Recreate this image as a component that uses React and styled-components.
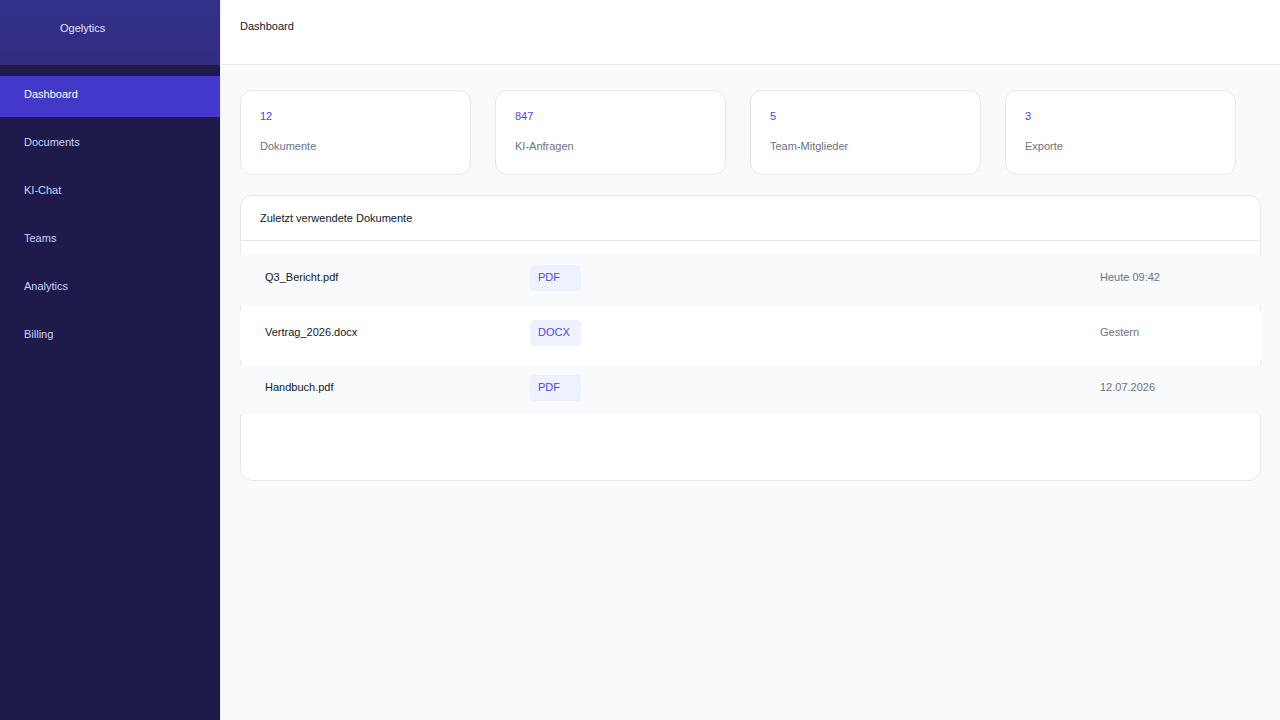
import React from "react";
import styled, { createGlobalStyle } from "styled-components";

const GlobalStyle = createGlobalStyle`
  * { box-sizing: border-box; }
  html, body { margin: 0; padding: 0; }
  body {
    font-family: "Liberation Sans", Arial, sans-serif;
    background: #f8fafc;
    color: #111827;
  }
`;

const navItems = ["Dashboard", "Documents", "KI-Chat", "Teams", "Analytics", "Billing"];

const stats = [
  { value: "12", label: "Dokumente" },
  { value: "847", label: "KI-Anfragen" },
  { value: "5", label: "Team-Mitglieder" },
  { value: "3", label: "Exporte" }
];

const documents = [
  { name: "Q3_Bericht.pdf", type: "PDF", date: "Heute 09:42" },
  { name: "Vertrag_2026.docx", type: "DOCX", date: "Gestern" },
  { name: "Handbuch.pdf", type: "PDF", date: "12.07.2026" }
];

const App = () => (
  <>
    <GlobalStyle />
    <Layout>
      <Sidebar>
        <Logo>Ogelytics</Logo>
        <Nav>
          {navItems.map((item, i) => (
            <NavItem key={item} active={i === 0}>
              {item}
            </NavItem>
          ))}
        </Nav>
      </Sidebar>
      <Main>
        <Header>Dashboard</Header>
        <Content>
          <StatGrid>
            {stats.map(stat => (
              <StatCard key={stat.label}>
                <StatValue>{stat.value}</StatValue>
                <StatLabel>{stat.label}</StatLabel>
              </StatCard>
            ))}
          </StatGrid>
          <Panel>
            <PanelTitle>Zuletzt verwendete Dokumente</PanelTitle>
            <DocList>
              {documents.map((doc, i) => (
                <DocRow key={doc.name} striped={i % 2 === 0}>
                  <DocName>{doc.name}</DocName>
                  <div>
                    <Badge>{doc.type}</Badge>
                  </div>
                  <DocDate>{doc.date}</DocDate>
                </DocRow>
              ))}
            </DocList>
          </Panel>
        </Content>
      </Main>
    </Layout>
  </>
);

const Layout = styled.div`
  display: flex;
  min-height: 100vh;
`;

const Sidebar = styled.aside`
  width: 221px;
  flex-shrink: 0;
  background: #1e1b4b;
  border-right: 1px solid #eef0f4;
`;

const Logo = styled.div`
  height: 65px;
  padding: 22px 0 0 60px;
  background: linear-gradient(180deg, #33308a, #312e81);
  color: #e0e7ff;
  font-size: 11px;
`;

const Nav = styled.nav`
  display: flex;
  flex-direction: column;
  gap: 7px;
  padding-top: 11px;
`;

const NavItem = styled.div`
  height: 41px;
  padding: 12px 24px 0;
  font-size: 11px;
  color: ${props => (props.active ? "#ffffff" : "#c7d2fe")};
  background: ${props => (props.active ? "#4338ca" : "transparent")};
`;

const Main = styled.main`
  flex: 1;
  display: flex;
  flex-direction: column;
`;

const Header = styled.header`
  height: 65px;
  padding: 20px 19px 0;
  background: #ffffff;
  border-bottom: 1px solid #e5e7eb;
  font-size: 11px;
  color: #111827;
`;

const Content = styled.div`
  padding: 25px 19px 20px 19px;
  display: flex;
  flex-direction: column;
  gap: 20px;
`;

const StatGrid = styled.div`
  display: flex;
  gap: 24px;
`;

const StatCard = styled.div`
  width: 231px;
  height: 85px;
  padding: 19px 19px 0;
  background: #ffffff;
  border: 1px solid #e5e7eb;
  border-radius: 12px;
`;

const StatValue = styled.div`
  font-size: 11px;
  color: #4f46e5;
  margin-bottom: 18px;
`;

const StatLabel = styled.div`
  font-size: 11px;
  color: #6b7280;
`;

const Panel = styled.section`
  background: #ffffff;
  border: 1px solid #e5e7eb;
  border-radius: 12px;
  padding-bottom: 65px;
`;

const PanelTitle = styled.div`
  height: 45px;
  padding: 16px 19px 0;
  border-bottom: 1px solid #e5e7eb;
  font-size: 11px;
  color: #111827;
`;

const DocList = styled.div`
  display: flex;
  flex-direction: column;
  gap: 5px;
  padding-top: 14px;
  margin: 0 -1px;
`;

const DocRow = styled.div`
  display: grid;
  grid-template-columns: 265px 570px 1fr;
  align-items: start;
  height: 50px;
  padding: 10px 25px 0;
  background: ${props => (props.striped ? "#f8fafc" : "#ffffff")};
  font-size: 11px;
`;

const DocName = styled.div`
  padding-top: 6px;
  color: #111827;
`;

const Badge = styled.span`
  display: inline-block;
  width: 51px;
  height: 26px;
  padding: 6px 8px 0;
  border-radius: 4px;
  background: #eef2ff;
  color: #4f46e5;
  font-size: 11px;
`;

const DocDate = styled.div`
  padding-top: 6px;
  color: #6b7280;
`;

export default App;
